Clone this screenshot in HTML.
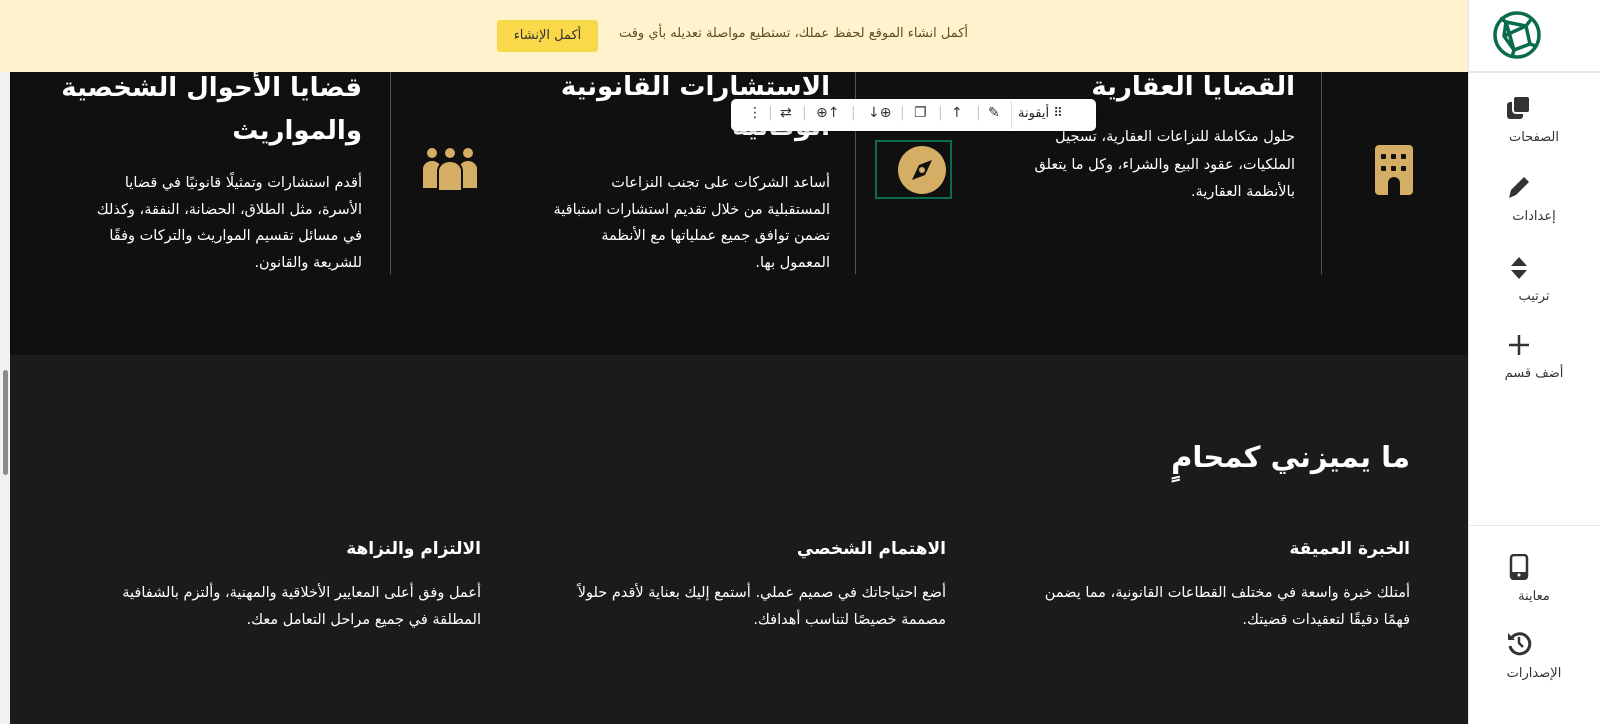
<!DOCTYPE html>
<html><head><meta charset="utf-8"><style>
*{margin:0;padding:0;box-sizing:border-box}
html,body{width:1600px;height:724px;overflow:hidden}
body{position:relative;font-family:"DejaVu Sans","Liberation Sans",sans-serif;background:#101010}
.a{position:absolute}
.r{direction:rtl;text-align:right;white-space:nowrap}
.h{color:#fff;font-weight:bold;font-size:26px;line-height:40px}
.p{color:#fff;font-size:14.5px;line-height:27px}
.lbl{position:absolute;left:1468px;width:132px;text-align:center;font-size:13px;color:#333;direction:rtl}
.gold{fill:#d4ae64}
</style></head><body>
<div class="a" style="left:0;top:72px;width:1468px;height:283px;background:#101010"></div>
<div class="a" style="left:0;top:355px;width:1468px;height:369px;background:#1b1b1b"></div>
<div class="a" style="left:0;top:72px;width:10px;height:652px;background:#f1f1f1"></div>
<div class="a" style="left:3px;top:370px;width:5px;height:105px;background:#8a8a8a;border-radius:3px"></div>

<!-- banner -->
<div class="a" style="left:0;top:0;width:1468px;height:72px;background:#fef3cd"></div>
<div class="a r" style="right:632px;top:26px;font-size:13px;color:#5e4e22">أكمل انشاء الموقع لحفظ عملك، تستطيع مواصلة تعديله بأي وقت</div>
<div class="a" style="left:497px;top:20px;width:101px;height:32px;background:#f9d84a;border-radius:3px;font-size:13px;color:#333;text-align:center;line-height:32px;direction:rtl">أكمل الإنشاء</div>

<!-- sidebar -->
<div class="a" style="left:1468px;top:0;width:132px;height:724px;background:#fff;border-left:1px solid #e3e3e3"></div>
<div class="a" style="left:1468px;top:71px;width:132px;height:2px;background:#e8e8e8"></div>
<div class="a" style="left:1468px;top:525px;width:132px;height:1px;background:#e8e8e8"></div>
<svg class="a" style="left:1492px;top:10px" width="50" height="50" viewBox="0 0 50 50" fill="none" stroke="#0a6b4f" stroke-width="3.5"><circle cx="25" cy="25" r="22"/><path d="M14 12 L34 16 L38 34 L22 40 L12 26 Z M14 12 L22 40 M12 26 L34 16 M14 12 L8 8 M34 16 L40 8 M38 34 L44 36 M22 40 L20 47"/></svg>
<svg class="a" style="left:1506px;top:95px" width="26" height="26" viewBox="0 0 26 26"><rect x="1" y="7" width="16" height="17" rx="3" fill="#333"/><rect x="7" y="1" width="17" height="17" rx="3" fill="#333" stroke="#fff" stroke-width="2"/></svg>
<div class="lbl" style="top:130px">الصفحات</div>
<svg class="a" style="left:1507px;top:174px" width="24" height="26" viewBox="0 0 24 26"><path d="M2 24 L4 16 L17 3 L22 8 L9 21 Z" fill="#333"/></svg>
<div class="lbl" style="top:209px">إعدادات</div>
<svg class="a" style="left:1510px;top:256px" width="18" height="24" viewBox="0 0 18 24"><path d="M9 1 L17 10 H1 Z M1 14 H17 L9 23 Z" fill="#333"/></svg>
<div class="lbl" style="top:289px">ترتيب</div>
<svg class="a" style="left:1508px;top:334px" width="22" height="22" viewBox="0 0 22 22"><path d="M11 1 V21 M1 11 H21" stroke="#333" stroke-width="2.5"/></svg>
<div class="lbl" style="top:366px">أضف قسم</div>
<svg class="a" style="left:1509px;top:554px" width="20" height="26" viewBox="0 0 20 26"><rect x="2" y="1" width="16" height="24" rx="3" fill="none" stroke="#333" stroke-width="2.5"/><rect x="3" y="18" width="14" height="6" fill="#333"/><circle cx="10" cy="21" r="1.5" fill="#fff"/></svg>
<div class="lbl" style="top:589px">معاينة</div>
<svg class="a" style="left:1506px;top:630px" width="26" height="26" viewBox="0 0 26 26" fill="none" stroke="#333" stroke-width="3"><path d="M5 9 A10 10 0 1 1 4 16"/><path d="M2 3 L9 10 L2 10Z" stroke-width="0" fill="#333"/><path d="M13 7 V13 L17 17" stroke-width="2.5"/></svg>
<div class="lbl" style="top:666px">الإصدارات</div>

<!-- section1 -->
<div class="a" style="left:390px;top:72px;width:1px;height:202px;background:#555"></div>
<div class="a" style="left:855px;top:72px;width:1px;height:202px;background:#555"></div>
<div class="a" style="left:1321px;top:72px;width:1px;height:202px;background:#555"></div>

<svg class="a" style="left:1375px;top:145px" width="38" height="50" viewBox="0 0 38 50"><path class="gold" d="M4 0 H34 A4 4 0 0 1 38 4 V46 A4 4 0 0 1 34 50 H25 V38 A6 6 0 0 0 13 38 V50 H4 A4 4 0 0 1 0 46 V4 A4 4 0 0 1 4 0Z"/><g fill="#101010"><rect x="6" y="9" width="5" height="5" rx="1"/><rect x="16" y="9" width="5" height="5" rx="1"/><rect x="26" y="9" width="5" height="5" rx="1"/><rect x="6" y="21" width="5" height="5" rx="1"/><rect x="16" y="21" width="5" height="5" rx="1"/><rect x="26" y="21" width="5" height="5" rx="1"/></g></svg>
<div class="a r h" style="right:305px;top:67px">القضايا العقارية</div>
<div class="a r p" style="right:305px;top:124px;line-height:27.5px">حلول متكاملة للنزاعات العقارية، تسجيل<br>الملكيات، عقود البيع والشراء، وكل ما يتعلق<br>بالأنظمة العقارية.</div>

<div class="a r h" style="right:770px;top:67px;line-height:40px">الاستشارات القانونية<br>الوقائية</div>
<div class="a r p" style="right:770px;top:170px;line-height:26.5px">أساعد الشركات على تجنب النزاعات<br>المستقبلية من خلال تقديم استشارات استباقية<br>تضمن توافق جميع عملياتها مع الأنظمة<br>المعمول بها.</div>
<div class="a" style="left:875px;top:140px;width:77px;height:59px;border:2px solid #0a6b4f"></div>
<svg class="a" style="left:896px;top:144px" width="52" height="52" viewBox="0 0 52 52"><circle cx="26" cy="26" r="24" class="gold"/><path d="M36 16 L29 31 L16 36 L23 21 Z" fill="#101010"/><circle cx="26" cy="26" r="3" class="gold"/></svg>

<div class="a r h" style="right:1238px;top:67px;line-height:43px">قضايا الأحوال الشخصية<br>والمواريث</div>
<div class="a r p" style="right:1238px;top:170px;line-height:26.5px">أقدم استشارات وتمثيلًا قانونيًا في قضايا<br>الأسرة، مثل الطلاق، الحضانة، النفقة، وكذلك<br>في مسائل تقسيم المواريث والتركات وفقًا<br>للشريعة والقانون.</div>
<svg class="a" style="left:418px;top:145px" width="64" height="46" viewBox="0 0 64 46"><g fill="#d4ae64" stroke="#101010" stroke-width="2"><circle cx="14" cy="8" r="6"/><circle cx="50" cy="8" r="6"/><path d="M4 24 A10 9 0 0 1 24 24 V44 H4 Z"/><path d="M40 24 A10 9 0 0 1 60 24 V44 H40 Z"/><circle cx="32" cy="8" r="6"/><path d="M20 26 A12 10 0 0 1 44 26 V46 H20 Z"/></g></svg>

<!-- toolbar -->
<div class="a" style="left:731px;top:99px;width:365px;height:32px;background:#fff;border-radius:5px;box-shadow:0 1px 3px rgba(0,0,0,.3)"></div>
<div class="a" style="left:1018px;top:106px;font-size:13px;color:#222;direction:rtl;white-space:nowrap">⠿ أيقونة</div>
<div class="a" style="left:1011px;top:101px;width:1px;height:28px;background:#ddd"></div>
<div class="a" style="left:731px;top:105px;font-size:14px;color:#333;white-space:nowrap">
<span style="position:absolute;left:17px">⋮</span>
<span style="position:absolute;left:37px;color:#ccc">|</span>
<span style="position:absolute;left:49px">⇄</span>
<span style="position:absolute;left:71px;color:#ccc">|</span>
<span style="position:absolute;left:85px">⊕↑</span>
<span style="position:absolute;left:120px;color:#ccc">|</span>
<span style="position:absolute;left:137px">↓⊕</span>
<span style="position:absolute;left:169px;color:#ccc">|</span>
<span style="position:absolute;left:183px">❐</span>
<span style="position:absolute;left:207px;color:#ccc">|</span>
<span style="position:absolute;left:220px">↑</span>
<span style="position:absolute;left:245px;color:#ccc">|</span>
<span style="position:absolute;left:257px">✎</span>
</div>

<!-- section2 -->
<div class="a r" style="right:190px;top:440px;color:#fff;font-weight:bold;font-size:29px">ما يميزني كمحامٍ</div>
<div class="a r" style="right:190px;top:539px;color:#fff;font-weight:bold;font-size:17px">الخبرة العميقة</div>
<div class="a r p" style="right:190px;top:580px">أمتلك خبرة واسعة في مختلف القطاعات القانونية، مما يضمن<br>فهمًا دقيقًا لتعقيدات قضيتك.</div>
<div class="a r" style="right:654px;top:539px;color:#fff;font-weight:bold;font-size:17px">الاهتمام الشخصي</div>
<div class="a r p" style="right:654px;top:580px">أضع احتياجاتك في صميم عملي. أستمع إليك بعناية لأقدم حلولاً<br>مصممة خصيصًا لتناسب أهدافك.</div>
<div class="a r" style="right:1119px;top:539px;color:#fff;font-weight:bold;font-size:17px">الالتزام والنزاهة</div>
<div class="a r p" style="right:1119px;top:580px">أعمل وفق أعلى المعايير الأخلاقية والمهنية، وألتزم بالشفافية<br>المطلقة في جميع مراحل التعامل معك.</div>
</body></html>
